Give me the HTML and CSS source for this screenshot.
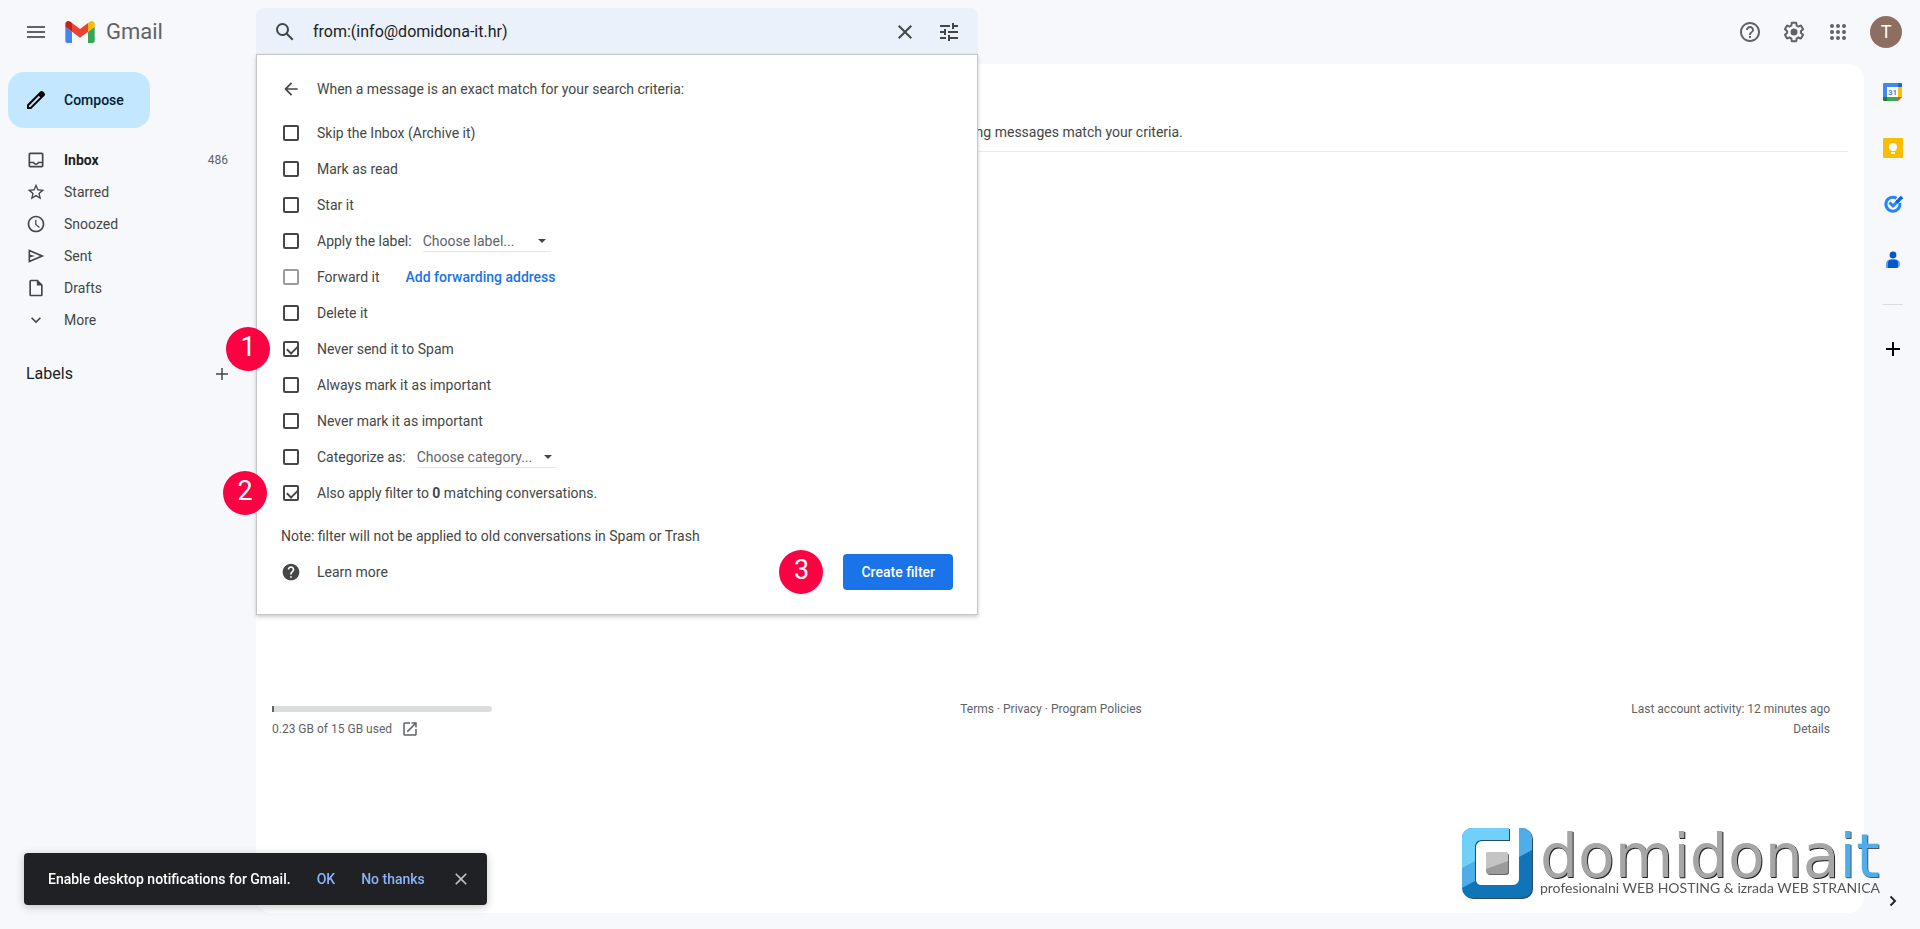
FILE: index.html
```html
<!DOCTYPE html>
<html lang="en">
<head>
  <meta charset="UTF-8" />
  <meta name="viewport" content="width=device-width, initial-scale=1.0"/>
  <title>Gmail</title>
  <link rel="stylesheet" href="styles.css">
</head>
<body>

  <!-- Header -->
  <header class="header">
    <div class="brand">
      <button type="button" class="icon-btn" aria-label="Main menu">
        <svg width="24" height="24" viewBox="0 0 24 24" fill="#5f6368"><path d="M3 18h18v-2H3v2zm0-5h18v-2H3v2zm0-7v2h18V6H3z"/></svg>
      </button>
      <a href="#" class="logo">
        <svg width="30" height="22" viewBox="52 42 88 66">
          <path fill="#4285f4" d="M58 108h14V74L52 59v43c0 3.320 2.690 6 6 6"/>
          <path fill="#34a853" d="M120 108h14c3.320 0 6-2.690 6-6V59l-20 15"/>
          <path fill="#fbbc04" d="M120 48v26l20-15v-8c0-7.420-8.470-11.650-14.400-7.200"/>
          <path fill="#ea4335" d="M72 74V48l24 18 24-18v26L96 92"/>
          <path fill="#c5221f" d="M52 51v8l20 15V48l-5.600-4.200c-5.940-4.450-14.400-.22-14.400 7.200"/>
        </svg>
        <span>Gmail</span>
      </a>
    </div>

    <form class="search" id="searchForm">
      <div class="search-bar">
        <button type="submit" class="icon-btn" aria-label="Search">
          <svg width="24" height="24" viewBox="0 0 24 24" fill="#444746"><path d="M20.490 19l-5.730-5.730C15.530 12.200 16 10.910 16 9.500A6.500 6.500 0 1 0 9.500 16c1.410 0 2.700-.47 3.770-1.240L19 20.490 20.490 19zM5 9.500C5 7.010 7.010 5 9.500 5S14 7.010 14 9.500 11.990 14 9.500 14 5 11.990 5 9.500z"/></svg>
        </button>
        <input type="text" class="search-input" aria-label="Search mail" value="from:(info@domidona-it.hr)">
        <button type="button" class="icon-btn" aria-label="Clear search">
          <svg width="24" height="24" viewBox="0 0 24 24" fill="#444746"><path d="M19 6.410L17.590 5 12 10.590 6.410 5 5 6.410 10.590 12 5 17.590 6.410 19 12 13.410 17.590 19 19 17.590 13.410 12z"/></svg>
        </button>
        <button type="button" class="icon-btn" aria-label="Show search options">
          <svg width="24" height="24" viewBox="0 0 24 24" fill="#444746"><path d="M3 17v2h6v-2H3zM3 5v2h10V5H3zm10 16v-2h8v-2h-8v-2h-2v6h2zM7 9v2H3v2h4v2h2V9H7zm14 4v-2H11v2h10zm-6-4h2V7h4V5h-4V3h-2v6z"/></svg>
        </button>
      </div>

      <!-- Filter panel -->
      <div class="filter-panel">
        <div class="filter-title">
          <button type="button" class="icon-btn" aria-label="Back">
            <svg width="20" height="20" viewBox="0 0 24 24" fill="#444746"><path d="M20 11H7.830l5.590-5.590L12 4l-8 8 8 8 1.410-1.410L7.830 13H20v-2z"/></svg>
          </button>
          <span>When a message is an exact match for your search criteria:</span>
        </div>

        <div class="filter-row">
          <input type="checkbox" id="archive">
          <label for="archive">Skip the Inbox (Archive it)</label>
        </div>
        <div class="filter-row">
          <input type="checkbox" id="read">
          <label for="read">Mark as read</label>
        </div>
        <div class="filter-row">
          <input type="checkbox" id="star">
          <label for="star">Star it</label>
        </div>
        <div class="filter-row">
          <input type="checkbox" id="applyLabel">
          <label for="applyLabel">Apply the label:</label>
          <div class="select">
            <select class="select-label" aria-label="Label">
              <option>Choose label...</option>
            </select>
          </div>
        </div>
        <div class="filter-row">
          <input type="checkbox" id="forward" disabled>
          <label for="forward">Forward it</label>
          <a href="#" class="forward-link">Add forwarding address</a>
        </div>
        <div class="filter-row">
          <input type="checkbox" id="delete">
          <label for="delete">Delete it</label>
        </div>
        <div class="filter-row">
          <span class="step step-one">1</span>
          <input type="checkbox" id="neverSpam" checked>
          <label for="neverSpam">Never send it to Spam</label>
        </div>
        <div class="filter-row">
          <input type="checkbox" id="important">
          <label for="important">Always mark it as important</label>
        </div>
        <div class="filter-row">
          <input type="checkbox" id="neverImportant">
          <label for="neverImportant">Never mark it as important</label>
        </div>
        <div class="filter-row">
          <input type="checkbox" id="categorize">
          <label for="categorize">Categorize as:</label>
          <div class="select">
            <select class="select-category" aria-label="Category">
              <option>Choose category...</option>
            </select>
          </div>
        </div>
        <div class="filter-row">
          <span class="step step-two">2</span>
          <input type="checkbox" id="applyAll" checked>
          <label for="applyAll">Also apply filter to <b>0</b> matching conversations.</label>
        </div>

        <p class="filter-note">Note: filter will not be applied to old conversations in Spam or Trash</p>

        <div class="filter-footer">
          <a href="#" class="learn-more">
            <svg width="20" height="20" viewBox="0 0 24 24" fill="#444746"><path d="M12 2C6.480 2 2 6.480 2 12s4.480 10 10 10 10-4.480 10-10S17.520 2 12 2zm1 17h-2v-2h2v2zm2.070-7.750l-.9.920C13.450 12.900 13 13.500 13 15h-2v-.5c0-1.100.45-2.100 1.170-2.830l1.240-1.260c.37-.36.59-.86.59-1.410 0-1.100-.9-2-2-2s-2 .9-2 2H8c0-2.210 1.790-4 4-4s4 1.790 4 4c0 .88-.36 1.680-.93 2.250z"/></svg>
            <span>Learn more</span>
          </a>
          <span class="step">3</span>
          <button type="submit" class="create-btn">Create filter</button>
        </div>
      </div>
    </form>

    <div class="header-actions">
      <button type="button" class="icon-btn" aria-label="Support">
        <svg width="24" height="24" viewBox="0 0 24 24" fill="#5f6368"><path d="M11 18h2v-2h-2v2zm1-16C6.480 2 2 6.480 2 12s4.480 10 10 10 10-4.480 10-10S17.520 2 12 2zm0 18c-4.410 0-8-3.590-8-8s3.590-8 8-8 8 3.590 8 8-3.590 8-8 8zm0-14c-2.210 0-4 1.790-4 4h2c0-1.100.9-2 2-2s2 .9 2 2c0 2-3 1.750-3 5h2c0-2.250 3-2.500 3-5 0-2.210-1.790-4-4-4z"/></svg>
      </button>
      <button type="button" class="icon-btn" aria-label="Settings">
        <svg width="24" height="24" viewBox="0 0 24 24" fill="#5f6368"><path d="M13.850 22.250h-3.700c-.74 0-1.360-.54-1.450-1.270l-.27-1.890c-.27-.14-.53-.29-.79-.46l-1.800.72c-.7.26-1.470-.03-1.810-.65L2.200 15.530c-.35-.66-.2-1.440.36-1.880l1.530-1.190c-.01-.15-.02-.3-.02-.46 0-.15.01-.31.02-.46l-1.520-1.190c-.59-.45-.74-1.260-.37-1.880l1.850-3.190c.34-.62 1.110-.9 1.790-.63l1.810.73c.26-.17.520-.32.780-.46l.27-1.910c.09-.7.710-1.250 1.440-1.250h3.700c.74 0 1.360.54 1.450 1.270l.27 1.890c.27.14.53.29.79.46l1.800-.72c.71-.26 1.480.03 1.820.65l1.840 3.180c.36.66.2 1.440-.36 1.880l-1.520 1.190c.01.15.02.3.02.46s-.01.31-.02.46l1.520 1.190c.56.45.72 1.230.37 1.860l-1.860 3.220c-.34.62-1.110.9-1.800.63l-1.800-.72c-.26.17-.52.32-.78.46l-.27 1.910c-.1.680-.72 1.220-1.460 1.220zm-3.230-2h2.760l.37-2.550.53-.22c.44-.18.88-.44 1.340-.78l.45-.34 2.380.96 1.380-2.400-2.030-1.580.07-.56c.03-.26.06-.51.06-.78s-.03-.53-.06-.78l-.07-.56 2.030-1.580-1.390-2.400-2.390.96-.45-.35c-.42-.32-.87-.58-1.330-.77l-.52-.22-.37-2.550h-2.760l-.37 2.550-.53.21c-.44.19-.88.44-1.340.79l-.45.33-2.380-.95-1.390 2.390 2.030 1.580-.07.56a7 7 0 0 0-.06.79c0 .26.02.53.06.78l.07.56-2.030 1.580 1.380 2.400 2.390-.96.45.35c.43.33.86.58 1.330.77l.53.22.38 2.550z"/><circle cx="12" cy="12" r="3.500"/></svg>
      </button>
      <button type="button" class="icon-btn" aria-label="Google apps">
        <svg width="24" height="24" viewBox="0 0 24 24" fill="#5f6368"><circle cx="6" cy="6" r="2"/><circle cx="12" cy="6" r="2"/><circle cx="18" cy="6" r="2"/><circle cx="6" cy="12" r="2"/><circle cx="12" cy="12" r="2"/><circle cx="18" cy="12" r="2"/><circle cx="6" cy="18" r="2"/><circle cx="12" cy="18" r="2"/><circle cx="18" cy="18" r="2"/></svg>
      </button>
      <button type="button" class="avatar">T</button>
    </div>
  </header>

  <div class="layout">
    <!-- Sidebar -->
    <aside class="sidebar">
      <button type="button" class="compose">
        <svg width="24" height="24" viewBox="0 0 24 24"><path d="M20.410 4.940l-1.350-1.350c-.78-.78-2.050-.78-2.830 0L3 16.820V21h4.180L20.410 7.770c.79-.78.79-2.050 0-2.830zM6.350 19H5v-1.350l9.820-9.820 1.350 1.350L6.350 19z"/></svg>
        <span>Compose</span>
      </button>

      <nav class="nav">
        <a href="#" class="nav-item active">
          <svg width="20" height="20" viewBox="0 0 24 24"><path d="M19 3H5c-1.100 0-2 .9-2 2v14c0 1.100.9 2 2 2h14c1.100 0 2-.9 2-2V5c0-1.100-.9-2-2-2zm0 16H5v-3h3.560c.69 1.190 1.970 2 3.450 2s2.750-.81 3.450-2H19v3zm0-5h-4.990c0 1.100-.9 2-2 2s-2-.9-2-2H5V5h14v9z"/></svg>
          <span>Inbox</span>
          <span class="count">486</span>
        </a>
        <a href="#" class="nav-item">
          <svg width="20" height="20" viewBox="0 0 24 24"><path d="M22 9.240l-7.190-.62L12 2 9.190 8.630 2 9.240l5.460 4.730L5.820 21 12 17.270 18.180 21l-1.630-7.030L22 9.240zM12 15.400l-3.760 2.270 1-4.280-3.320-2.880 4.380-.38L12 6.100l1.710 4.040 4.380.38-3.320 2.880 1 4.280L12 15.400z"/></svg>
          <span>Starred</span>
        </a>
        <a href="#" class="nav-item">
          <svg width="20" height="20" viewBox="0 0 24 24"><path d="M12 2C6.500 2 2 6.500 2 12s4.500 10 10 10 10-4.500 10-10S17.500 2 12 2zm0 18c-4.410 0-8-3.590-8-8s3.590-8 8-8 8 3.590 8 8-3.590 8-8 8zM12.500 7H11v6l4.700 3.700.9-1.200-4.100-3.200z"/></svg>
          <span>Snoozed</span>
        </a>
        <a href="#" class="nav-item">
          <svg width="20" height="20" viewBox="0 0 24 24"><path d="M3 4v16l19-8L3 4zm2 3l11.850 5L5 17v-3.500l6-1.500-6-1.500V7z"/></svg>
          <span>Sent</span>
        </a>
        <a href="#" class="nav-item">
          <svg width="20" height="20" viewBox="0 0 24 24"><path d="M14 2H6c-1.100 0-2 .9-2 2v16c0 1.100.9 2 2 2h12c1.100 0 2-.9 2-2V8l-6-6zM6 20V4h7v5h5v11H6z"/></svg>
          <span>Drafts</span>
        </a>
        <a href="#" class="nav-item">
          <svg width="20" height="20" viewBox="0 0 24 24"><path d="M16.590 8.590L12 13.170 7.410 8.590 6 10l6 6 6-6z"/></svg>
          <span>More</span>
        </a>
      </nav>

      <div class="labels">
        <h2>Labels</h2>
        <button type="button" class="icon-btn" aria-label="Create new label">
          <svg width="20" height="20" viewBox="0 0 20 20" fill="#444746"><path d="M16 9.250h-5.250V4h-1.500v5.250H4v1.500h5.250V16h1.500v-5.250H16z"/></svg>
        </button>
      </div>
    </aside>

    <!-- Mail list -->
    <main class="main">
      <p class="empty">No existing messages match your criteria.</p>

      <footer class="footer">
        <div>
          <div class="storage-bar"><div class="storage-used" style="width: 1%"></div></div>
          <div class="storage-text">
            <span>0.23 GB of 15 GB used</span>
            <a href="#" aria-label="Manage storage">
              <svg width="18" height="18" viewBox="0 0 24 24" fill="#5f6368"><path d="M19 19H5V5h7V3H5a2 2 0 0 0-2 2v14a2 2 0 0 0 2 2h14c1.100 0 2-.9 2-2v-7h-2v7zM14 3v2h3.590l-9.830 9.830 1.410 1.410L19 6.410V10h2V3h-7z"/></svg>
            </a>
          </div>
        </div>
        <div class="footer-links">
          <a href="#">Terms</a> · <a href="#">Privacy</a> · <a href="#">Program Policies</a>
        </div>
        <div class="activity">
          <div>Last account activity: 12 minutes ago</div>
          <a href="#">Details</a>
        </div>
      </footer>
    </main>

    <!-- Side panel -->
    <aside class="rail">
      <a href="#" aria-label="Calendar">
        <svg width="20" height="20" viewBox="0 0 20 20">
          <path fill="#4285f4" d="M0 2a1 1 0 0 1 1-1h14v4H4v10H0z"/>
          <path fill="#1967d2" d="M15 1h3a1 1 0 0 1 1 1v3h-4z"/>
          <path fill="#fbbc04" d="M15 5h4v10h-4z"/>
          <path fill="#34a853" d="M4 15h11v4H4z"/>
          <path fill="#188038" d="M0 15h4v4H1a1 1 0 0 1-1-1z"/>
          <path fill="#ea4335" d="M15 15h4l-4 4z"/>
          <path fill="#fff" d="M4 5h11v10H4z"/>
          <text x="9.500" y="13" class="cal-day" text-anchor="middle">31</text>
        </svg>
      </a>
      <a href="#" aria-label="Keep">
        <svg width="20" height="20" viewBox="0 0 20 20"><rect width="20" height="20" rx="1" fill="#fbbc04"/><circle cx="10" cy="9" r="4" fill="#fff"/><path fill="#fff" d="M8 11h4v2H8zM8 14h4v2H8z"/></svg>
      </a>
      <a href="#" aria-label="Tasks">
        <svg width="20" height="20" viewBox="0 0 20 20" fill="none"><path d="M13.500 4.200A7 7 0 1 0 16.800 9" stroke="#2684fc" stroke-width="3"/><path d="M6.500 8.500l3.500 3.500 5-5" stroke="#2684fc" stroke-width="3"/><path d="M13.500 8.500L19 3" stroke="#0066da" stroke-width="3.200"/></svg>
      </a>
      <a href="#" aria-label="Contacts">
        <svg width="20" height="20" viewBox="0 0 20 20"><circle cx="10" cy="5" r="3.400" fill="#0056cc"/><path fill="#6b95f9" d="M3 18v-4c0-3 2-4.500 4-4.500h6c2 0 4 1.500 4 4.500 0 2-1 4-3 4z"/><path fill="#0056cc" d="M5 18v-4.500c0-2.500 1.500-4 4-4h2c2.500 0 4 1.500 4 4V16c0 1-.5 2-2 2z"/></svg>
      </a>
      <hr>
      <button type="button" class="icon-btn" aria-label="Get add-ons">
        <svg width="20" height="20" viewBox="0 0 20 20"><path d="M17 9h-6V3H9v6H3v2h6v6h2v-6h6z"/></svg>
      </button>
      <button type="button" class="icon-btn rail-toggle" aria-label="Hide side panel">
        <svg width="20" height="20" viewBox="0 0 24 24" fill="#202124"><path d="M8.200 16.600L9.800 18.200 16 12 9.800 5.800 8.200 7.400l4.600 4.600z"/></svg>
      </button>
    </aside>
  </div>

  <!-- Notification -->
  <div class="snackbar">
    <span>Enable desktop notifications for Gmail.</span>
    <button type="button" class="snack-action">OK</button>
    <button type="button" class="snack-action">No thanks</button>
    <button type="button" class="icon-btn" aria-label="Close">
      <svg width="20" height="20" viewBox="0 0 24 24" fill="#bdc1c6"><path d="M19 6.410L17.590 5 12 10.590 6.410 5 5 6.410 10.590 12 5 17.590 6.410 19 12 13.410 17.590 19 19 17.590 13.410 12z"/></svg>
    </button>
  </div>

  <!-- Watermark -->
  <div class="watermark">
    <svg width="72" height="72" viewBox="0 0 72 72">
      <defs>
        <clipPath id="mark"><path d="M10 0h37v12H19a6 6 0 0 0-6 6v33a6 6 0 0 0 6 6h32a6 6 0 0 0 6-6V0h3a10 10 0 0 1 10 10v50a10 10 0 0 1-10 10H10A10 10 0 0 1 0 60V10A10 10 0 0 1 10 0z"/></clipPath>
        <clipPath id="dot"><rect x="24" y="24" width="22" height="22" rx="3"/></clipPath>
      </defs>
      <path fill="#2b4a63" transform="translate(1 1)" d="M10 0h37v12H19a6 6 0 0 0-6 6v33a6 6 0 0 0 6 6h32a6 6 0 0 0 6-6V0h3a10 10 0 0 1 10 10v50a10 10 0 0 1-10 10H10A10 10 0 0 1 0 60V10A10 10 0 0 1 10 0z"/>
      <g clip-path="url(#mark)">
        <path fill="#0f75b8" d="M0 0h70v70H0z"/>
        <path fill="#4fade9" d="M0 0h70v22L0 60z"/>
        <path fill="#6fd0fa" d="M0 0h48v14L0 40z"/>
      </g>
      <rect x="25" y="25" width="22" height="22" rx="3" fill="#666"/>
      <g clip-path="url(#dot)">
        <path fill="#9b9b9b" d="M24 24h22v22H24z"/>
        <path fill="#c4c4c4" d="M24 24h22v9l-22 8z"/>
      </g>
    </svg>
    <div class="watermark-text">
      <div class="watermark-name"><span class="gray">domidona</span><span class="blue">it</span></div>
      <div class="watermark-tag">profesionalni WEB HOSTING &amp; izrada WEB STRANICA</div>
    </div>
  </div>

  <script>
    // Keep the page in place when the form is submitted
    document.getElementById('searchForm').addEventListener('submit', function (e) {
      e.preventDefault();
    });
  </script>
</body>
</html>
```
FILE: styles.css
```css
* {
  box-sizing: border-box;
}

body {
  margin: 0;
  min-height: 100vh;
  display: flex;
  flex-direction: column;
  background: #f6f8fc;
  color: #444746;
  font-family: Roboto, Arial, sans-serif;
  font-size: 14px;
  line-height: 20px;
}

a {
  color: inherit;
  text-decoration: none;
}

button, input, select {
  font: inherit;
  color: inherit;
}

button {
  cursor: pointer;
}

svg {
  display: block;
}

.icon-btn {
  display: flex;
  padding: 0;
  border: none;
  background: none;
}

/* Header */
.header {
  display: flex;
  height: 64px;
}

.brand {
  width: 256px;
  flex-shrink: 0;
  display: flex;
  align-items: center;
  gap: 17px;
  padding-left: 24px;
}

.logo {
  display: flex;
  align-items: center;
  gap: 11px;
  color: #5f6368;
  font-size: 22px;
}

.search {
  position: relative;
  flex: 0 1 722px;
  padding-top: 8px;
}

.search-bar {
  display: flex;
  align-items: center;
  gap: 20px;
  height: 48px;
  padding: 0 17px;
  background: #eaf1fb;
  border-radius: 8px 8px 0 0;
}

.search-input {
  flex: 1;
  min-width: 0;
  padding: 0;
  margin-left: -4px;
  border: none;
  outline: none;
  background: none;
  color: #202124;
  font-size: 16px;
}

.header-actions {
  display: flex;
  align-items: center;
  gap: 20px;
  margin-left: auto;
  padding-right: 18px;
}

.avatar {
  width: 32px;
  height: 32px;
  padding: 0;
  border: none;
  border-radius: 50%;
  background: #8d6e63;
  color: #fff;
  font-size: 18px;
}

/* Filter panel */
.filter-panel {
  position: absolute;
  top: 54px;
  left: 0;
  right: 0;
  z-index: 2;
  padding: 16px 24px 24px;
  border: 1px solid #c4c7c5;
  background: #fff;
  box-shadow: 0 2px 4px rgba(0, 0, 0, 0.2);
}

.filter-title {
  display: flex;
  align-items: center;
  gap: 16px;
  height: 36px;
  margin-bottom: 8px;
}

.filter-row {
  position: relative;
  display: flex;
  align-items: center;
  height: 36px;
}

.filter-row input {
  appearance: none;
  width: 16px;
  height: 16px;
  margin: 0 18px 0 2px;
  border: 2px solid #444746;
  border-radius: 2px;
}

.filter-row input:disabled {
  border-color: #9a9c9b;
}

.filter-row input:checked::after {
  content: "";
  display: block;
  width: 9px;
  height: 5px;
  margin: 2px 0 0 2px;
  border-left: 2px solid #444746;
  border-bottom: 2px solid #444746;
  transform: rotate(-45deg);
}

.select {
  position: relative;
  margin-left: 11px;
}

.select::after {
  content: "";
  position: absolute;
  top: 9px;
  right: 5px;
  border: 4px solid transparent;
  border-top-color: #444746;
  border-bottom: none;
}

.select select {
  appearance: none;
  height: 22px;
  padding: 0;
  border: none;
  border-bottom: 1px solid #e6e6e6;
  border-radius: 0;
  background: none;
  color: #5f6368;
}

.select-label {
  width: 128px;
}

.select-category {
  width: 140px;
}

.forward-link {
  margin-left: 26px;
  color: #1a73e8;
  font-weight: 500;
}

.filter-note {
  margin: 15px 0 8px;
}

.filter-footer {
  display: flex;
  align-items: center;
  height: 36px;
}

.learn-more {
  display: flex;
  align-items: center;
  gap: 16px;
  margin-right: auto;
}

.create-btn {
  height: 36px;
  margin-left: 20px;
  padding: 0 18px;
  border: none;
  border-radius: 4px;
  background: #1a73e8;
  color: #fff;
  font-weight: 500;
}

.step {
  width: 44px;
  height: 44px;
  border-radius: 50%;
  background: #fb0242;
  color: #fff;
  font-size: 27px;
  line-height: 40px;
  text-align: center;
}

.step-one {
  position: absolute;
  left: -55px;
}

.step-two {
  position: absolute;
  left: -58px;
}

/* Sidebar */
.layout {
  flex: 1;
  display: flex;
}

.sidebar {
  width: 256px;
  flex-shrink: 0;
  padding-top: 8px;
}

.compose {
  display: flex;
  align-items: center;
  gap: 16px;
  height: 56px;
  margin: 0 0 16px 8px;
  padding: 0 26px 0 16px;
  border: none;
  border-radius: 16px;
  background: #c2e7ff;
  color: #001d35;
  font-weight: 500;
}

.nav-item {
  display: flex;
  align-items: center;
  gap: 18px;
  height: 32px;
  padding: 0 28px 0 26px;
  fill: #444746;
}

.nav-item.active {
  color: #202124;
  font-weight: bold;
}

.count {
  margin-left: auto;
  color: #5f6368;
  font-size: 12px;
  font-weight: normal;
}

.labels {
  display: flex;
  align-items: center;
  justify-content: space-between;
  margin-top: 28px;
  padding: 0 24px 0 26px;
}

.labels h2 {
  margin: 0;
  color: #202124;
  font-size: 16px;
  font-weight: normal;
}

/* Mail list */
.main {
  flex: 1;
  margin-bottom: 16px;
  padding: 48px 16px 0;
  border-radius: 16px;
  background: #fff;
}

.empty {
  margin: 0;
  padding: 10px 16px 9px 0;
  border-bottom: 1px solid #e8eaed;
  text-align: center;
}

.footer {
  display: grid;
  grid-template-columns: 1fr 1fr 1fr;
  margin-top: 547px;
  padding-right: 18px;
  color: #5f6368;
  font-size: 12px;
}

.storage-bar {
  width: 220px;
  height: 6px;
  margin-top: 7px;
  border-radius: 0 3px 3px 0;
  background: #dadce0;
}

.storage-used {
  height: 6px;
  background: #5f6368;
}

.storage-text {
  display: flex;
  align-items: center;
  gap: 9px;
  margin-top: 7px;
}

.footer-links {
  text-align: center;
}

.activity {
  text-align: right;
}

/* Side panel */
.rail {
  width: 56px;
  flex-shrink: 0;
  display: flex;
  flex-direction: column;
  align-items: center;
  gap: 36px;
  padding: 18px 0 18px 2px;
}

.rail hr {
  width: 20px;
  margin: -2px 0 -2px;
  border: none;
  border-top: 1px solid #dadce0;
}

.rail-toggle {
  margin-top: auto;
}

.cal-day {
  fill: #4285f4;
  font-size: 8px;
  font-weight: bold;
}

/* Notification */
.snackbar {
  position: fixed;
  left: 24px;
  bottom: 24px;
  z-index: 3;
  display: flex;
  align-items: center;
  gap: 26px;
  height: 52px;
  padding: 0 16px 0 24px;
  border-radius: 4px;
  background: #202124;
  box-shadow: 0 2px 8px rgba(60, 64, 67, 0.3);
  color: #fff;
  font-weight: 500;
}

.snack-action {
  padding: 0;
  border: none;
  background: none;
  color: #8ab4f8;
  font-weight: 500;
}

/* Watermark */
.watermark {
  position: fixed;
  right: 40px;
  bottom: 29px;
  display: flex;
  gap: 6px;
}

.watermark-name {
  padding-top: 2px;
  height: 51px;
  font-family: "DejaVu Sans", sans-serif;
  font-size: 60px;
  line-height: 52px;
}

.gray {
  color: #a6a6a6;
  text-shadow: 1px 1px 0 #222;
}

.blue {
  color: #4fade9;
  text-shadow: 1px 1px 0 #555;
}

.watermark-tag {
  color: #555;
  font-family: Lato, sans-serif;
  font-size: 14px;
  line-height: 18px;
}
```
